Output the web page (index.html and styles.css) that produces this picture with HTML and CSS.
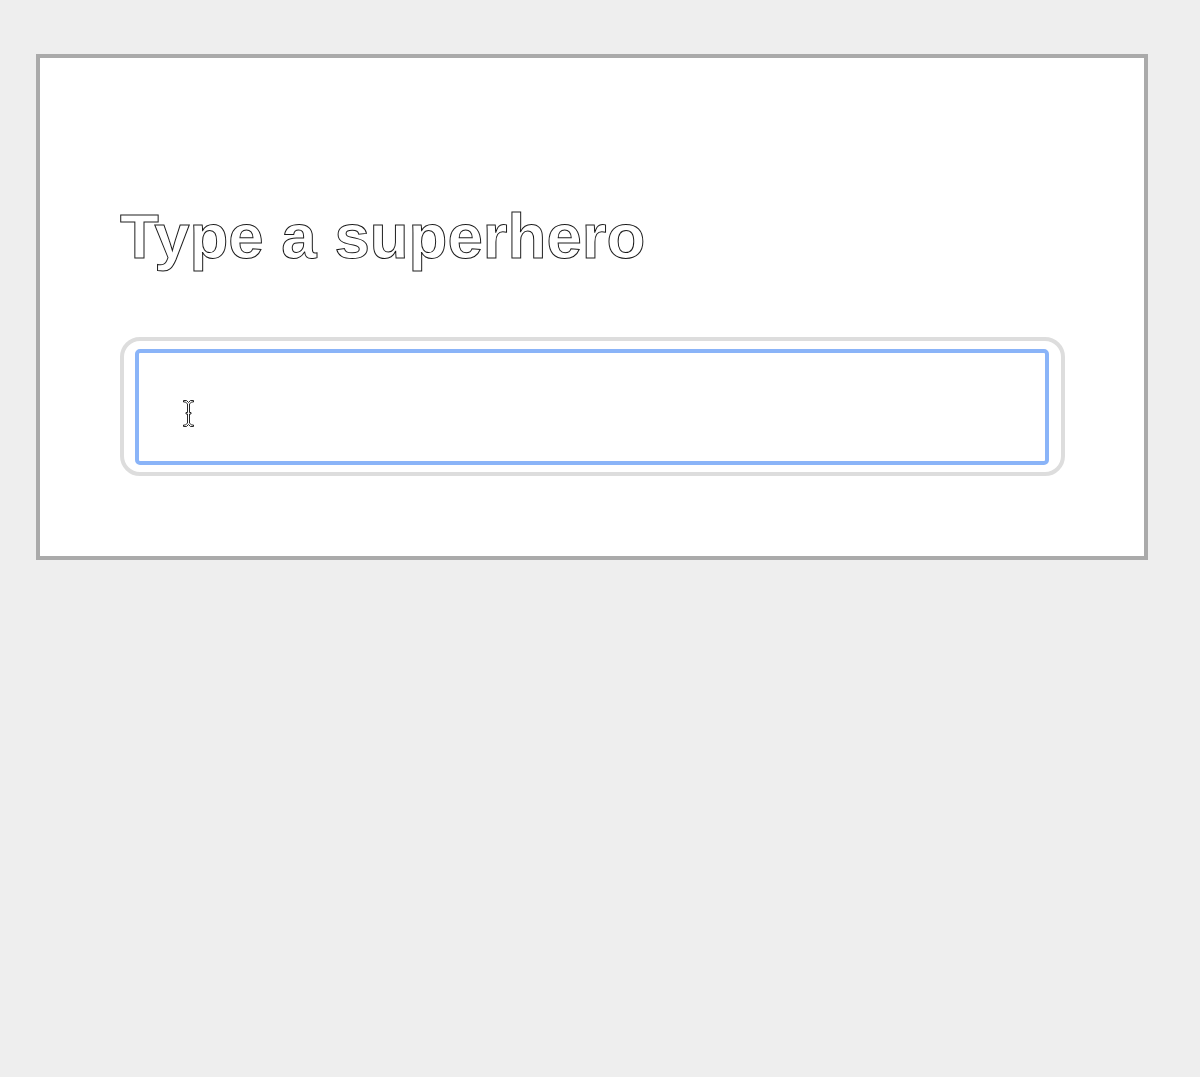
FILE: index.html
```html
<!DOCTYPE html>
<html lang="en">
<head>
<meta charset="utf-8">
<title>Type a superhero</title>
<link rel="stylesheet" href="styles.css">
</head>
<body>
<main class="card">
  <h1 class="title">Type a superhero</h1>
  <div class="ring">
    <div class="field" role="textbox" aria-label="Superhero">
      <svg class="ibeam" width="13" height="29" viewBox="0 0 13 29" aria-hidden="true">
        <path d="M1.5 1.5 H4.5 L6.5 3.5 L8.5 1.5 H11.5 V3 H9.5 L7.5 5 V13.5 H9 V15 H7.5 V24 L9.5 26 H11.5 V27.5 H8.5 L6.5 25.5 L4.5 27.5 H1.5 V26 H3.5 L5.5 24 V15 H4 V13.5 H5.5 V5 L3.5 3 H1.5 Z" fill="#fff" stroke="#111" stroke-width="0.9" stroke-linejoin="miter"/>
      </svg>
    </div>
  </div>
</main>
</body>
</html>
```

FILE: styles.css
```css
html, body {
  margin: 0;
  padding: 0;
}

body {
  background: #eeeeee;
  font-family: "Liberation Sans", Arial, sans-serif;
  min-height: 1077px;
  padding: 54px 52px 0 36px;
  box-sizing: border-box;
}

.card {
  background: #ffffff;
  border: 4px solid #aaaaaa;
  padding: 141px 79px 80px 80px;
  display: flex;
  flex-direction: column;
  gap: 64px;
}

.title {
  margin: 0;
  font-size: 63.6px;
  line-height: 74px;
  font-weight: 700;
  color: #ffffff;
  -webkit-text-stroke: 1px #1a1a1a;
}

.ring {
  border: 4px solid #dddddd;
  border-radius: 20px;
  padding: 8px 12px 7px 11px;
}

.field {
  position: relative;
  height: 108px;
  border: 4px solid #8ab4f8;
  border-radius: 5px;
  background: #ffffff;
}

.ibeam {
  position: absolute;
  left: 43px;
  top: 46px;
}
```
